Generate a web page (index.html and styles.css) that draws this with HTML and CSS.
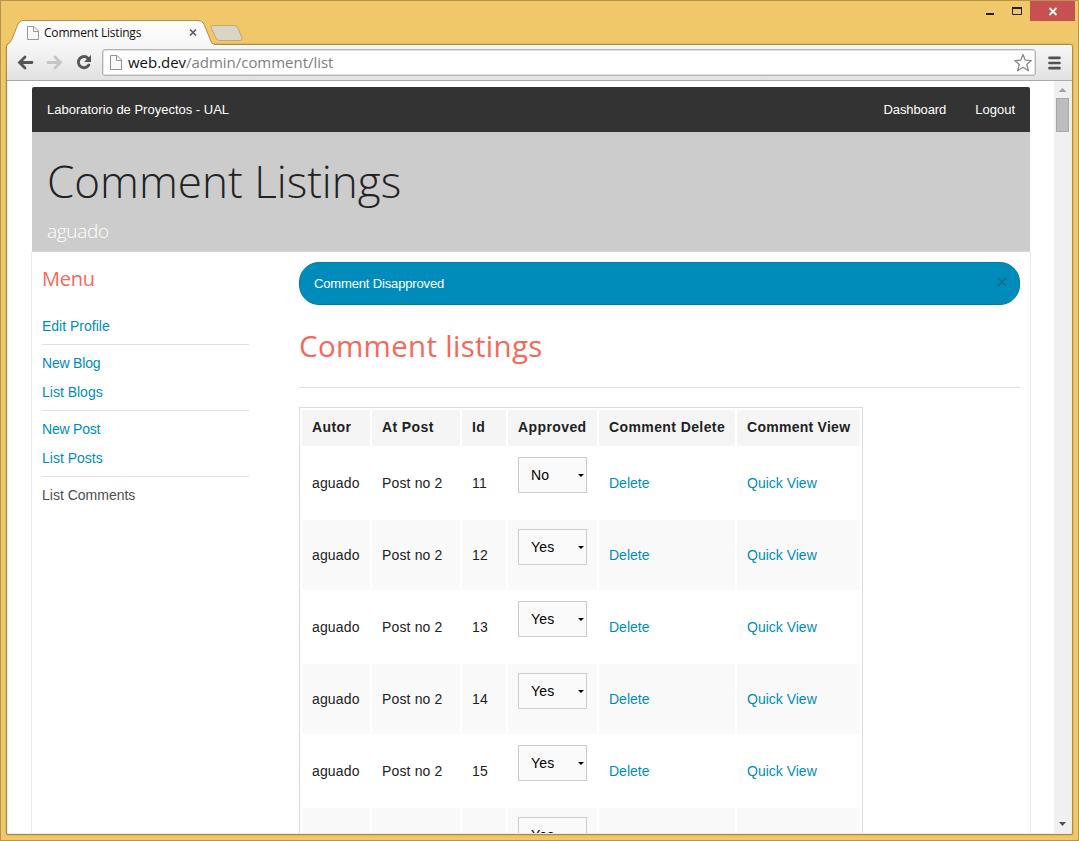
FILE: index.html
```html
<!DOCTYPE html>
<html lang="es">
<head>
<meta charset="utf-8">
<title>Comment Listings</title>
<link rel="stylesheet" href="styles.css">
</head>
<body>
<div class="window">
  <div class="tabstrip">
    <svg class="tabs" width="260" height="27" viewBox="0 0 260 27">
      <defs><linearGradient id="tabfill" x1="0" y1="0" x2="0" y2="1"><stop offset="0" stop-color="#fff"/><stop offset="1" stop-color="#f7f7f7"/></linearGradient></defs>
      <path d="M8 25.500C10 24 11 23 12 20L18 5Q20 1.500 23 1.500H198Q202 1.500 204 5L210 20Q211.500 25 215 25.500L215 27H8Z" fill="url(#tabfill)"/>
      <path d="M7 25.500Q10.500 24 12 20L18 5Q20 1.500 23 1.500H198Q202 1.500 204 5L210 20Q211.500 25.500 215 25.500" fill="none" stroke="#b3914b"/>
      <path d="M212 6.500H234Q237 6.500 238 9L242 19Q242.500 21.500 240 21.500H220Q217 21.500 216 19L211 8.500Q210.500 6.500 213 6.500Z" fill="#dad5c7" stroke="#c5a868"/>
      <path d="M27.500 7.500H34L38.500 12V20.500H27.500ZM33.500 7.500V12.500H38.500" fill="#f8f8f8" stroke="#999"/>
      <path d="M190 10.500L196 16.500M196 10.500L190 16.500" stroke="#5b5b5b" stroke-width="1.700"/>
    </svg>
    <span class="tab-title">Comment Listings</span>
    <svg class="controls" width="100" height="21" viewBox="0 0 100 21">
      <path d="M7 13H15V15H7Z" fill="#222"/>
      <path d="M33.500 7.500H42.500V14.500H33.500Z" fill="none" stroke="#222"/><path d="M33 7H43V9H33Z" fill="#222"/>
      <path d="M51 1H96V21H51Z" fill="#c75050"/>
      <path d="M70.500 8L77.500 15M77.500 8L70.500 15" stroke="#fff" stroke-width="1.800"/>
    </svg>
  </div>
  <div class="browser">
    <div class="toolbar">
      <svg class="nav" width="92" height="36" viewBox="0 0 92 36">
        <g fill="none" stroke-width="2.800" stroke-linecap="round">
          <path d="M24 18.500H12M17 13L11.500 18.500L17 24" stroke="#555"/>
          <path d="M40 18.500H52M47 13L52.500 18.500L47 24" stroke="#c5c5c5"/>
          <path d="M80 14.200A5.600 5.600 0 1 0 80.800 21" stroke="#555"/>
        </g>
        <path d="M83 11V18H76Z" fill="#555"/>
      </svg>
      <div class="address">
        <svg width="14" height="18" viewBox="0 0 14 18"><path d="M2.500 1.500H9L13.500 6V15.500H2.500ZM8.500 1.500V6.500H13.500" fill="#f8f8f8" stroke="#919191"/></svg>
        <span class="url">web.dev<span class="path">/admin/comment/list</span></span>
        <svg class="star" width="20" height="20" viewBox="0 0 20 20"><path d="M10 1.500L12.300 7.200L18.300 7.600L13.700 11.500L15.400 17.700L10 14.200L4.600 17.700L6.300 11.500L1.700 7.600L7.700 7.200Z" fill="#fff" stroke="#888" stroke-width="1.300" stroke-linejoin="round"/></svg>
      </div>
      <svg class="menu-icon" width="13" height="14" viewBox="0 0 13 14"><path d="M1.500 1.800H11.500M1.500 7H11.500M1.500 12.200H11.500" stroke="#515151" stroke-width="2.700" stroke-linecap="round"/></svg>
    </div>
    <div class="viewport">
      <div class="site">
        <nav class="topbar"><a>Laboratorio de Proyectos - UAL</a><a class="dash">Dashboard</a><a>Logout</a></nav>
        <header class="banner"><h1>Comment Listings</h1><p>aguado</p></header>
        <div class="columns">
          <aside class="sidebar">
            <h2>Menu</h2>
            <ul>
              <li><a>Edit Profile</a></li>
              <li class="divider"></li>
              <li class="new"><a>New Blog</a></li>
              <li><a>List Blogs</a></li>
              <li class="divider"></li>
              <li class="new"><a>New Post</a></li>
              <li><a>List Posts</a></li>
              <li class="divider"></li>
              <li class="active">List Comments</li>
            </ul>
          </aside>
          <main class="main">
            <div class="alert"><span>Comment Disapproved</span><svg width="10" height="10" viewBox="0 0 10 10"><path d="M1 1L9 9M9 1L1 9" stroke="#086a8d" stroke-width="1.500"/></svg></div>
            <h2>Comment listings</h2>
            <table>
              <colgroup><col class="c1"><col class="c2"><col class="c3"><col class="c4"><col class="c5"><col class="c6"></colgroup>
              <thead><tr><th>Autor</th><th>At Post</th><th>Id</th><th>Approved</th><th>Comment Delete</th><th class="last">Comment View</th></tr></thead>
              <tbody>
                <tr><td>aguado</td><td>Post no 2</td><td>11</td><td class="sel"><div class="select">No</div></td><td><a>Delete</a></td><td><a>Quick View</a></td></tr>
                <tr><td>aguado</td><td>Post no 2</td><td>12</td><td class="sel"><div class="select">Yes</div></td><td><a>Delete</a></td><td><a>Quick View</a></td></tr>
                <tr><td>aguado</td><td>Post no 2</td><td>13</td><td class="sel"><div class="select">Yes</div></td><td><a>Delete</a></td><td><a>Quick View</a></td></tr>
                <tr><td>aguado</td><td>Post no 2</td><td>14</td><td class="sel"><div class="select">Yes</div></td><td><a>Delete</a></td><td><a>Quick View</a></td></tr>
                <tr><td>aguado</td><td>Post no 2</td><td>15</td><td class="sel"><div class="select">Yes</div></td><td><a>Delete</a></td><td><a>Quick View</a></td></tr>
                <tr><td></td><td></td><td></td><td class="sel"><div class="select">Yes</div></td><td></td><td></td></tr>
              </tbody>
            </table>
          </main>
        </div>
      </div>
      <div class="scrollbar">
        <svg width="17" height="17" viewBox="0 0 17 17"><path d="M4.500 11L8.500 7L12.500 11Z" fill="#a0a0a0"/></svg>
        <div class="thumb"></div>
        <svg class="down" width="17" height="17" viewBox="0 0 17 17"><path d="M5 6H12L8.500 10Z" fill="#505050"/></svg>
      </div>
    </div>
  </div>
</div>
</body>
</html>
```

FILE: styles.css
```css
* { box-sizing: border-box; }
body { margin: 0; overflow: hidden; font-family: "Liberation Sans", Arial, sans-serif; font-size: 14px; color: #222; }
h1, h2, p, ul { margin: 0; padding: 0; }
ul { list-style: none; }
svg { display: block; flex: none; }
a { color: #008cba; }
.window { width: 1079px; height: 841px; background: #f0c869; border: 1px solid #b4954f; padding: 0 5px 5px; display: flex; flex-direction: column; }
.tabstrip { height: 43px; flex: none; position: relative; z-index: 1; }
.tabs { position: absolute; left: -6px; top: 18px; }
.tab-title { position: absolute; left: 38px; top: 24px; font: 12px/16px "Open Sans", sans-serif; letter-spacing: -0.2px; color: #111; white-space: nowrap; }
.controls { position: absolute; right: -6px; top: -1px; }
.browser { flex: 1; min-height: 0; display: flex; flex-direction: column; border: 1px solid #a98a48; border-radius: 3px 3px 2px 2px; box-shadow: 0 0 2px #b4954f; overflow: hidden; padding: 0 1px 1px; background: #e9ebee; }
.toolbar { height: 36px; flex: none; margin: 0 -1px; display: flex; align-items: center; border-bottom: 1px solid #a9a9a9; background: linear-gradient(#f7f7f7, #e1e1e1); padding: 0 10px 0 1px; }
.address { width: 934px; height: 27px; background: #fff; border: 1px solid #b3b3b3; box-shadow: inset 0 0 0 1px #e2e2e2; border-radius: 3px; margin-left: 2px; padding: 0 2px 0 5px; display: flex; align-items: center; }
.nav { position: relative; top: -1px; }
.url { font: 15px/22px "Open Sans", sans-serif; color: #111; margin: -2px 0 0 6px; letter-spacing: -.03px; }
.path { color: #808080; }
.star { margin-left: auto; }
.menu-icon { margin-left: 12px; }
.viewport { flex: 1; min-height: 0; display: flex; background: #fff; overflow: hidden; padding-left: 23px; }
.site { width: 1000px; flex: none; margin-top: 6px; }
.topbar { height: 45px; margin: 0 1px; background: #333; border-radius: 2px 2px 0 0; display: flex; align-items: center; padding: 0 15px; font-size: 13px; }
.topbar a { color: #fff; }
.dash { margin: 0 29px 0 auto; letter-spacing: -.1px; }
.banner { height: 120px; margin: 0 1px; background: #ccc; border-bottom: 1px solid #d8d8d8; padding: 19px 15px 0; }
.banner h1 { font: 300 44px/60px "Open Sans", sans-serif; color: #222; }
.banner p { font: 300 19px/27px "Open Sans", sans-serif; letter-spacing: -.3px; color: #fff; margin-top: 7px; }
.columns { display: flex; height: 640px; border: solid #ebebeb; border-width: 0 1px; padding: 10px; gap: 50px; }
.sidebar { width: 207px; }
h2 { color: #f3695a; font-family: "Open Sans", sans-serif; font-weight: 400; }
.sidebar h2 { font-size: 20px; letter-spacing: -.25px; line-height: 34px; margin-bottom: 16px; }
.sidebar li { height: 29px; line-height: 28px; }
.sidebar li.new { letter-spacing: -.2px; }
.sidebar li.divider { height: 1px; background: #e1e1e1; margin: 3px 0 4px; }
.sidebar .active { color: #4d4d4d; }
.main { width: 721px; }
.alert { height: 43px; border: 1px solid #007ba3; background: #008cba; border-radius: 20px; color: #fff; font-size: 13px; letter-spacing: -.15px; display: flex; align-items: center; justify-content: space-between; padding: 0 12px 0 14px; }
.alert svg { margin-bottom: 3px; }
.main h2 { font-size: 29.5px; letter-spacing: .3px; line-height: 40px; padding: 21px 0 21px; height: 83px; border-bottom: 1px solid #ddd; }
table { width: 564px; table-layout: fixed; margin-top: 19px; border: 1px solid #ddd; border-collapse: separate; border-spacing: 2px; }
.c1 { width: 68px; }
.c2 { width: 88px; }
.c3 { width: 44px; }
.c4 { width: 89px; }
.c5 { width: 136px; }
.c6 { width: 123px; }
th { height: 36px; background: #f5f5f5; text-align: left; padding: 0 0 2px 10px; letter-spacing: .4px; white-space: nowrap; }
th.last { letter-spacing: .27px; }
td { height: 70px; padding: 0 0 0 10px; white-space: nowrap; letter-spacing: .15px; }
td a { letter-spacing: 0; }
tbody tr:nth-child(even) td { background: #f9f9f9; }
td.sel { vertical-align: top; padding-top: 9px; }
.select { width: 69px; height: 36px; border: 1px solid #ccc; background: #fafafa; color: #000; padding: 0 2px 0 12px; display: flex; align-items: center; justify-content: space-between; }
.select::after { content: ""; border: solid transparent; border-width: 3px 3px 0; border-top-color: #000; }
.scrollbar { width: 17px; margin-left: auto; background: #f0f0f0; display: flex; flex-direction: column; }
.thumb { width: 13px; height: 34px; margin-left: 2px; background: #bdbdbd; border: 1px solid #a8a8a8; }
.down { margin-top: auto; }
```
